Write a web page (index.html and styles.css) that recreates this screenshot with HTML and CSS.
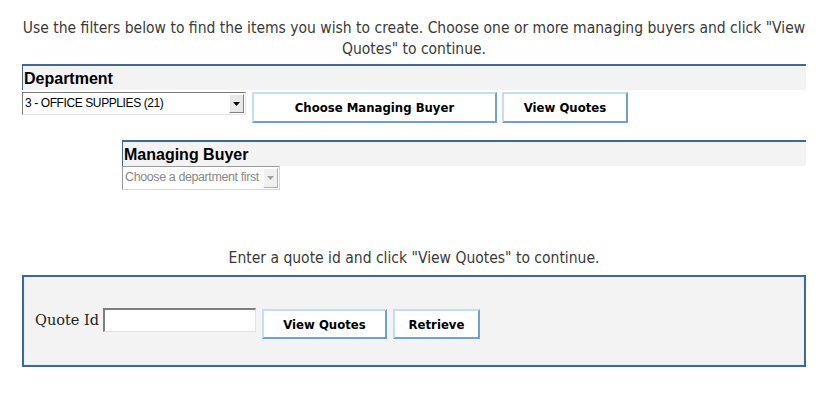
FILE: index.html
```html
<!DOCTYPE html>
<html>
<head>
<meta charset="utf-8">
<link rel="stylesheet" href="styles.css">
</head>
<body>
<div class="page">
  <p class="intro">Use the filters below to find the items you wish to create. Choose one or more managing buyers and click "View Quotes" to continue.</p>

  <div class="panel">
    <div class="panel-head">Department</div>
    <div class="panel-row">
      <div class="select dept">
        <span class="select-text">3 - OFFICE SUPPLIES (21)</span>
        <span class="select-arrow"><svg width="7" height="4" viewBox="0 0 7 4"><path d="M0 0H7L3.5 4Z" fill="#000"/></svg></span>
      </div>
      <button class="btn btn-choose">Choose Managing Buyer</button>
      <button class="btn btn-view">View Quotes</button>
    </div>
  </div>

  <div class="panel panel-buyer">
    <div class="panel-head">Managing Buyer</div>
    <div class="panel-row">
      <div class="select buyer disabled">
        <span class="select-text">Choose a department first</span>
        <span class="select-arrow"><svg width="7" height="4" viewBox="0 0 7 4"><path d="M0 0H7L3.5 4Z" fill="#a0a0a0"/></svg></span>
      </div>
    </div>
  </div>

  <p class="note">Enter a quote id and click "View Quotes" to continue.</p>

  <div class="quote-box">
    <div class="quote-row">
      <label class="quote-label">Quote Id</label>
      <input class="quote-input" type="text">
      <button class="btn btn-qview">View Quotes</button>
      <button class="btn btn-retrieve">Retrieve</button>
    </div>
  </div>
</div>
</body>
</html>
```

FILE: styles.css
```css
html, body {
  margin: 0;
  padding: 0;
  background: #ffffff;
}

.page {
  padding: 0 22px;
  font-family: "DejaVu Sans Condensed", "DejaVu Sans", sans-serif;
  color: #333;
}

.intro {
  margin: 18px 0 0;
  font-size: 15.5px;
  line-height: 21px;
  text-align: center;
  color: #3a3a3a;
}

.panel {
  margin-top: 4px;
}

.panel-head {
  height: 24px;
  border-top: 2px solid #3f6898;
  border-left: 1px solid #3f6898;
  background: #f3f3f3;
  font-family: "Liberation Sans", Arial, sans-serif;
  font-weight: bold;
  font-size: 16px;
  line-height: 25px;
  color: #000;
  padding-left: 1px;
}

.panel-row {
  display: flex;
  align-items: flex-start;
  gap: 6px;
  margin-top: 1px;
}

.select {
  display: flex;
  align-items: stretch;
  box-sizing: border-box;
  background: #fff;
  border-top: 1px solid #7a7a7a;
  border-left: 1px solid #7a7a7a;
  border-right: 1px solid #e4e4e4;
  border-bottom: 1px solid #e4e4e4;
  font-family: "Liberation Sans", Arial, sans-serif;
  font-size: 12px;
  letter-spacing: -0.4px;
  color: #000;
}

.select-text {
  flex: 1;
  padding-left: 2px;
  line-height: 20px;
  white-space: nowrap;
  overflow: hidden;
}

.select-arrow {
  width: 15px;
  margin: 1px;
  display: flex;
  align-items: center;
  justify-content: center;
  background: #e8e8e8;
  border-top: 1px solid #fff;
  border-left: 1px solid #fff;
  border-right: 1px solid #808080;
  border-bottom: 1px solid #808080;
  box-sizing: border-box;
}

.dept {
  width: 224px;
  height: 23px;
  margin-top: 1px;
}

.buyer {
  width: 158px;
  height: 24px;
  font-size: 12.5px;
}

.disabled {
  color: #888;
  border-color: #9a9a9a #d8d8d8 #d8d8d8 #9a9a9a;
}

.disabled .select-arrow {
  background: #f0f0f0;
  border-right-color: #b0b0b0;
  border-bottom-color: #b0b0b0;
}

.btn {
  box-sizing: border-box;
  height: 31px;
  margin: 1px 0 0;
  padding: 0;
  background: #fff;
  border: 2px solid;
  border-color: #c4dcf6 #6e9fd9 #6e9fd9 #c4dcf6;
  font-family: "DejaVu Sans Condensed", "DejaVu Sans", sans-serif;
  font-weight: bold;
  font-size: 13px;
  color: #000;
}

.btn-choose {
  width: 245px;
}

.btn-view {
  width: 126px;
  margin-left: -1px;
}

.panel-buyer {
  margin-top: 17px;
  margin-left: 100px;
}

.panel-buyer .panel-row {
  margin-top: 0;
}

.note {
  margin: 58px 0 0;
  font-size: 15.5px;
  line-height: 21px;
  text-align: center;
  color: #3a3a3a;
}

.quote-box {
  margin-top: 6px;
  height: 92px;
  box-sizing: border-box;
  border: 2px solid #3f6898;
  box-shadow: inset 0 0 0 1px #e8eef6;
  background: #f3f3f3;
  padding: 31px 0 0 11px;
}

.quote-row {
  display: flex;
  align-items: flex-start;
}

.quote-label {
  font-family: "DejaVu Serif", serif;
  font-size: 14.5px;
  line-height: 18px;
  padding-top: 3px;
  color: #222;
  margin-right: 4px;
}

.quote-input {
  box-sizing: border-box;
  width: 153px;
  height: 24px;
  margin: 0;
  background: #fff;
  border-top: 2px solid #7e7e7e;
  border-left: 2px solid #7e7e7e;
  border-right: 1px solid #e2e2e2;
  border-bottom: 1px solid #e2e2e2;
}

.btn-qview {
  width: 125px;
  height: 30px;
  margin-left: 6px;
}

.btn-retrieve {
  width: 87px;
  height: 30px;
  margin-left: 6px;
}
```
